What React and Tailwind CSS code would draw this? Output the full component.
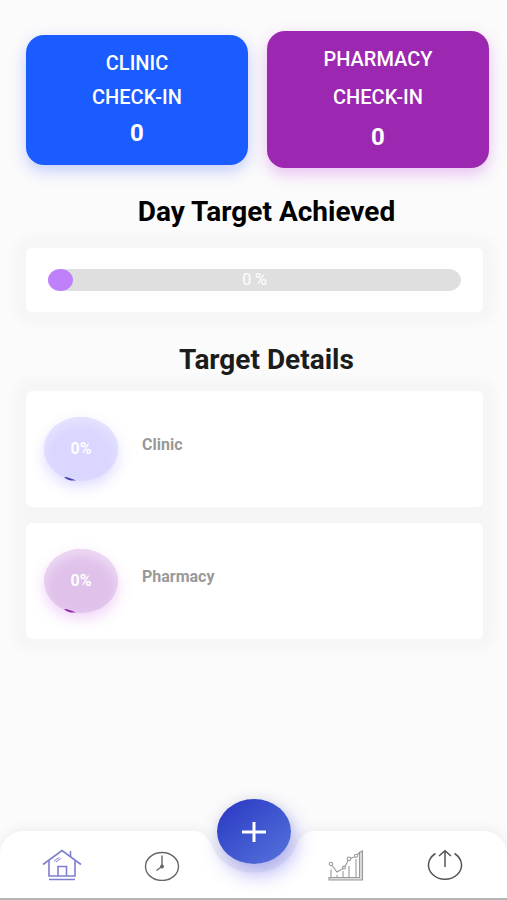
function CheckInCard({ title, count, className }) {
  return (
    <button
      type="button"
      className={`flex flex-1 flex-col items-center rounded-[18px] text-white ${className}`}
    >
      <span className="text-xl leading-7 font-medium">{title}</span>
      <span className="text-xl leading-7 font-medium">CHECK-IN</span>
      <span className="text-2xl leading-8 font-bold">{count}</span>
    </button>
  );
}

function SectionTitle({ children, className }) {
  return (
    <h2 className={`pl-6 text-center text-[28px] leading-8 font-bold ${className}`}>
      {children}
    </h2>
  );
}

function TargetRow({ label, percent, circle, arc }) {
  return (
    <li className="flex items-center gap-6 rounded-md bg-white px-[18px] py-[26px]">
      <div
        className={`relative flex h-16 w-[74px] items-center justify-center rounded-[50%] text-base font-bold text-white ${circle}`}
      >
        {percent}%
        <svg
          className={`absolute bottom-0 left-5 h-2 w-4 ${arc}`}
          viewBox="0 0 16 8"
          fill="currentColor"
        >
          <path d="M0 4 C4 4 8 6 12 7.5 C7 8 3 7 0 4Z" />
        </svg>
      </div>
      <span className="pb-2 text-base leading-6 font-bold text-[#999]">{label}</span>
    </li>
  );
}

function HomeIcon() {
  return (
    <svg width="40" height="32" viewBox="0 0 40 32" fill="none" stroke="#7f7fd0" strokeWidth="1.6">
      <path d="M1 15.5 20 1.5 39 15.5" />
      <path d="M7 12V27H33V12M16 27V17.5H24.5V27M7 30.5H33" />
      <path d="M28.5 8V2" />
      <path d="M12 12.2 17.2 8.4M14 13 18.8 9.5" strokeWidth="1" />
    </svg>
  );
}

function ClockIcon() {
  return (
    <svg width="36" height="32" viewBox="0 0 36 32" fill="none" stroke="#666" strokeWidth="1.4">
      <ellipse cx="18" cy="17.5" rx="16.5" ry="14" />
      <path d="M18 6.5V17.5L12.5 21.5" />
      <circle cx="18" cy="17.5" r="1.2" fill="#666" />
    </svg>
  );
}

function ChartIcon() {
  return (
    <svg width="36" height="32" viewBox="0 0 36 32" fill="none" stroke="#999" strokeWidth="1.1">
      <path d="M1 28.5H31.5V3.5L34.5 2V31H1Z" fill="#ddd" />
      <path d="M3 20.5V28M9 26V28M15 22V28M21 17V28M28 10V28" />
      <path d="M4.2 16.5 9 23 15 19.5M17 17.5 20 11.5M22.5 9.5 26 8" />
      <circle cx="3" cy="15" r="1.7" />
      <circle cx="16" cy="18.5" r="1.4" />
      <circle cx="21" cy="9.8" r="1.8" />
      <circle cx="28" cy="6.8" r="1.6" />
      <path d="M29.5 5.5 32 3" />
    </svg>
  );
}

function PowerIcon() {
  return (
    <svg width="36" height="32" viewBox="0 0 36 32" fill="none" stroke="#555" strokeWidth="1.5">
      <path d="M8.5 4.5A16.5 14.2 0 1 0 27.5 4.5" />
      <path d="M18 18V2M12 7 18 1.8 24 7" />
    </svg>
  );
}

function BottomNav() {
  return (
    <nav className="grid h-[69px] grid-cols-[1fr_116px_1fr] border-b-2 border-[#b5b5b5] drop-shadow-[0_-2px_6px_rgba(0,0,0,0.05)]">
      <div className="flex items-center justify-between rounded-tl-[24px] bg-white pr-4 pl-[42px]">
        <button type="button" aria-label="Home">
          <HomeIcon />
        </button>
        <button type="button" aria-label="History">
          <ClockIcon />
        </button>
      </div>
      <div className="relative">
        <svg
          className="h-full w-full"
          viewBox="0 0 116 66"
          preserveAspectRatio="none"
          fill="#fff"
        >
          <path d="M0 0C9 2 13 8 17 17C24 32 40 41 58 41C76 41 92 32 99 17C103 8 107 2 116 0V66H0Z" />
        </svg>
        <button
          type="button"
          aria-label="Add"
          className="absolute -top-8 left-[21px] flex h-[65px] w-[74px] items-center justify-center rounded-[50%] bg-linear-to-br from-[#2b34c2] to-[#5873dc] shadow-[4px_10px_20px_rgba(85,85,235,0.45)]"
        >
          <svg width="26" height="22" viewBox="0 0 26 22" fill="none" stroke="#fff" strokeWidth="3">
            <path d="M13 1V21M1 11H25" />
          </svg>
        </button>
      </div>
      <div className="flex items-center justify-between rounded-tr-[24px] bg-white pr-11 pl-4">
        <button type="button" aria-label="Reports">
          <ChartIcon />
        </button>
        <button type="button" aria-label="Log out">
          <PowerIcon />
        </button>
      </div>
    </nav>
  );
}

export default function App() {
  return (
    <div className="flex min-h-screen flex-col bg-[#fbfbfb] font-['Roboto','Liberation_Sans',sans-serif]">
      <main className="flex-1 pt-[31px] pr-6 pl-[26px]">
        <div className="-mr-1.5 flex items-center gap-[19px]">
          <CheckInCard
            title="CLINIC"
            count={0}
            className="gap-1.5 bg-[#1a5cff] pt-[14px] pb-4 shadow-[0_6px_16px_rgba(80,110,255,0.32)]"
          />
          <CheckInCard
            title="PHARMACY"
            count={0}
            className="gap-2.5 bg-[#9c27b0] pt-[14px] pb-[15px] shadow-[0_6px_16px_rgba(190,70,220,0.32)]"
          />
        </div>

        <SectionTitle className="mt-7 text-black">Day Target Achieved</SectionTitle>

        <section className="mt-5 rounded-md bg-white px-[22px] py-[21px] shadow-[0_0_8px_12px_#f6f6f6]">
          <div className="relative flex h-[22px] items-center justify-center rounded-[13px/11px] bg-[#dfdfdf] text-base text-white">
            <div className="absolute inset-y-0 left-0 w-[25px] rounded-[50%] bg-[#bf80fb]" />
            0 %
          </div>
        </section>

        <SectionTitle className="mt-8 text-[#1c1c1c]">Target Details</SectionTitle>

        <ul className="mt-[15px] flex flex-col gap-4 rounded-md bg-[#f5f5f5] shadow-[0_0_8px_12px_#f6f6f6]">
          <TargetRow
            label="Clinic"
            percent={0}
            circle="bg-[#d9d6ff] shadow-[0_6px_14px_rgba(150,140,255,0.3),inset_0_6px_12px_#e6e4ff]"
            arc="text-[#4a3fae]"
          />
          <TargetRow
            label="Pharmacy"
            percent={0}
            circle="bg-[#e0c1ea] shadow-[0_6px_14px_rgba(210,110,230,0.3),inset_0_6px_12px_#eedcf4]"
            arc="text-[#8e24aa]"
          />
        </ul>
      </main>

      <BottomNav />
    </div>
  );
}
